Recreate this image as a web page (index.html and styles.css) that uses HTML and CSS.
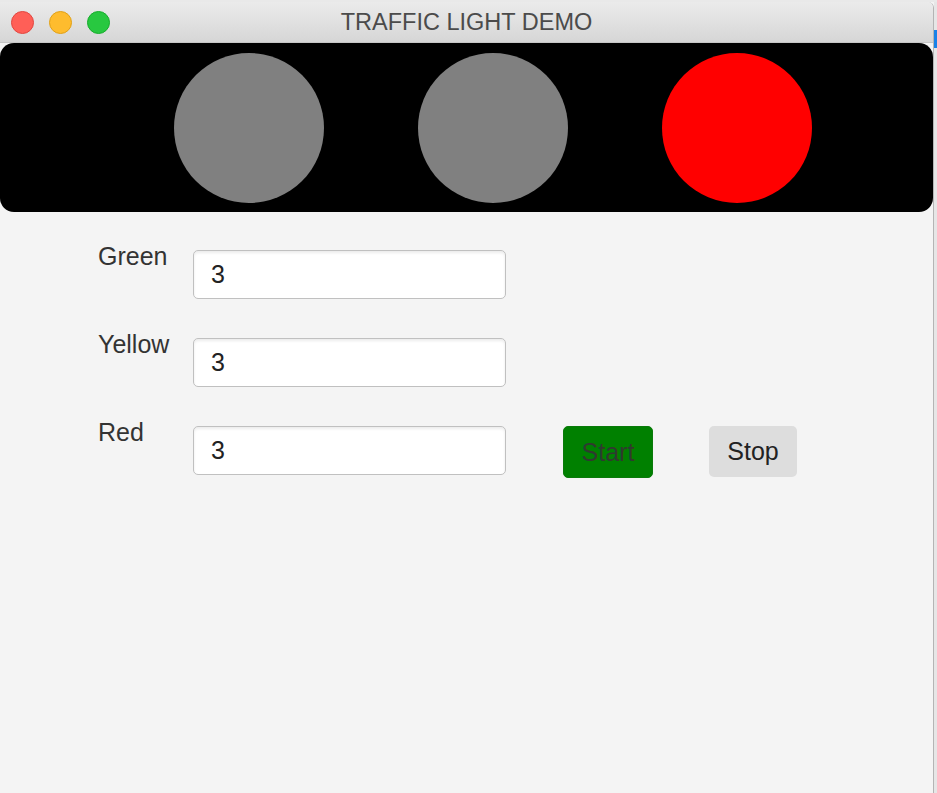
FILE: index.html
```html
<!DOCTYPE html>
<html>
<head>
<meta charset="utf-8">
<title>Traffic Light Demo</title>
<link rel="stylesheet" href="styles.css">
</head>
<body>
<div class="screen">
  <div class="top-strip"></div>
  <div class="main">
    <div class="window">
      <div class="titlebar">
        <div class="lights">
          <span class="dot dot-close"></span>
          <span class="dot dot-min"></span>
          <span class="dot dot-max"></span>
        </div>
        <div class="title">TRAFFIC LIGHT DEMO</div>
        <div class="title-spacer"></div>
      </div>
      <div class="signal">
        <div class="lamp lamp-off"></div>
        <div class="lamp lamp-off"></div>
        <div class="lamp lamp-red"></div>
      </div>
      <div class="form">
        <div class="row">
          <label class="label">Green</label>
          <input class="field" type="text" value="3">
        </div>
        <div class="row">
          <label class="label">Yellow</label>
          <input class="field" type="text" value="3">
        </div>
        <div class="row">
          <label class="label">Red</label>
          <input class="field" type="text" value="3">
          <button class="btn btn-start">Start</button>
          <button class="btn btn-stop">Stop</button>
        </div>
      </div>
    </div>
    <div class="desk-edge">
      <div class="desk-blue"></div>
    </div>
  </div>
</div>
</body>
</html>
```
FILE: styles.css
```css
html, body {
  margin: 0;
  padding: 0;
}
body {
  width: 937px;
  height: 793px;
  overflow: hidden;
  background: #f4f4f4;
  font-family: "Liberation Sans", Arial, sans-serif;
}
.screen {
  display: flex;
  flex-direction: column;
  height: 793px;
}
.top-strip {
  height: 2px;
  background: #e9e9e9;
}
.main {
  display: flex;
  flex: 1;
}
.window {
  width: 933px;
  border-right: 1px solid #b4b4b4;
  display: flex;
  flex-direction: column;
  background: #f4f4f4;
  border-top-right-radius: 6px;
  overflow: hidden;
}
.titlebar {
  height: 41px;
  box-sizing: border-box;
  display: grid;
  grid-template-columns: 1fr auto 1fr;
  align-items: center;
  background: linear-gradient(#ebebeb, #d6d6d6);
  border-bottom: 1px solid #c6c6c6;
}
.lights {
  display: flex;
  gap: 15px;
  padding-left: 11px;
}
.dot {
  width: 23px;
  height: 23px;
  border-radius: 50%;
  box-sizing: border-box;
  border: 1px solid;
}
.dot-close { background: #ff5f57; border-color: #e2463f; }
.dot-min { background: #febc2e; border-color: #e1a116; }
.dot-max { background: #28c840; border-color: #17ad2c; }
.title {
  font-size: 23.5px;
  color: #4b4b4b;
  line-height: 1;
  padding-top: 1px;
}
.signal {
  height: 169px;
  background: #000;
  border-radius: 14px;
  display: flex;
  align-items: center;
  padding-left: 174px;
  gap: 94px;
}
.lamp {
  width: 150px;
  height: 150px;
  border-radius: 50%;
}
.lamp-off { background: #808080; }
.lamp-red { background: #ff0000; }
.form {
  padding: 33px 0 0 98px;
  display: flex;
  flex-direction: column;
  gap: 34px;
}
.row {
  display: flex;
  align-items: flex-start;
}
.label {
  width: 95px;
  font-size: 25px;
  line-height: 25px;
  color: #333;
  margin-top: -1px;
}
.field {
  margin: 5px 0 0 0;
  width: 313px;
  height: 49px;
  box-sizing: border-box;
  border: 1px solid #c0c0c0;
  border-radius: 5px;
  padding: 0 0 0 17px;
  font-family: "Liberation Sans", Arial, sans-serif;
  font-size: 25px;
  color: #222;
  background: #fff;
  box-shadow: inset 0 2px 3px rgba(0, 0, 0, 0.08);
  outline: none;
}
.btn {
  margin-top: 5px;
  padding: 0;
  font-family: "Liberation Sans", Arial, sans-serif;
  font-size: 25px;
  border-radius: 5px;
  box-sizing: border-box;
}
.btn-start {
  margin-left: 57px;
  width: 90px;
  height: 52px;
  background: #008000;
  border: 1px solid #0a7a0a;
  color: #2f3a2f;
}
.btn-stop {
  margin-left: 56px;
  width: 88px;
  height: 51px;
  background: #dddddd;
  border: none;
  color: #222;
}
.desk-edge {
  width: 3px;
  background: #e6e6e6;
  display: flex;
  flex-direction: column;
}
.desk-blue {
  margin-top: 28px;
  height: 18px;
  background: #1a82e8;
}
```
